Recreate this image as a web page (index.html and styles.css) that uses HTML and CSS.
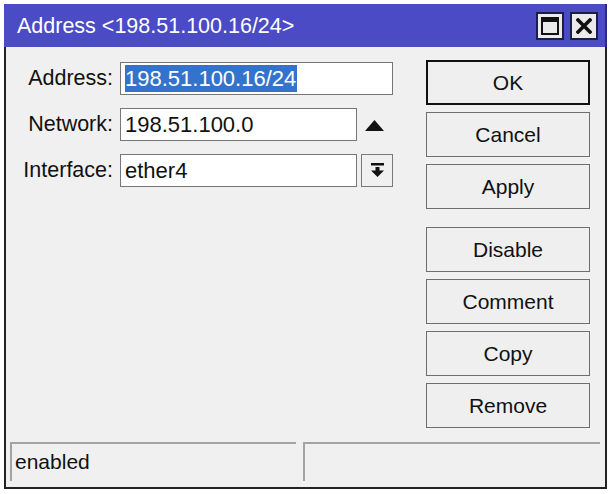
FILE: index.html
```html
<!DOCTYPE html>
<html>
<head>
<meta charset="utf-8">
<link rel="stylesheet" href="styles.css">
</head>
<body>
<div class="window">
  <div class="titlebar">
    <span class="title">Address &lt;198.51.100.16/24&gt;</span>
    <div class="tbtns">
      <div class="tbtn">
        <svg width="18" height="18" viewBox="0 0 18 18"><rect x="1" y="1" width="16" height="16" fill="none" stroke="#111" stroke-width="2"/><rect x="1" y="1" width="16" height="4" fill="#111"/></svg>
      </div>
      <div class="tbtn">
        <svg width="16" height="16" viewBox="0 0 16 16"><path d="M2 2 L14 14 M14 2 L2 14" stroke="#111" stroke-width="3.6" stroke-linecap="square"/></svg>
      </div>
    </div>
  </div>
  <div class="main">
    <div class="form">
      <label class="lbl">Address:</label>
      <div class="field wide"><span class="sel">198.51.100.16/24</span></div>
      <label class="lbl">Network:</label>
      <div class="field">198.51.100.0</div>
      <div class="uparrow">
        <svg width="19" height="11" viewBox="0 0 19 11"><polygon points="9.5,0 19,11 0,11" fill="#111"/></svg>
      </div>
      <label class="lbl">Interface:</label>
      <div class="field">ether4</div>
      <div class="ddbtn">
        <svg width="13" height="15" viewBox="0 0 13 15"><rect x="0" y="0" width="13" height="2.5" fill="#111"/><rect x="4.5" y="4" width="4" height="4" fill="#111"/><polygon points="0,7.5 13,7.5 6.5,14" fill="#111"/></svg>
      </div>
    </div>
    <div class="buttons">
      <div class="btn default">OK</div>
      <div class="btn">Cancel</div>
      <div class="btn">Apply</div>
      <div class="btn sep">Disable</div>
      <div class="btn">Comment</div>
      <div class="btn">Copy</div>
      <div class="btn">Remove</div>
    </div>
  </div>
  <div class="statusbar">
    <div class="panel left">enabled</div>
    <div class="panel right"></div>
  </div>
</div>
</body>
</html>
```
FILE: styles.css
```css
html, body {
  margin: 0;
  padding: 0;
  background: #ffffff;
}
body {
  padding: 4px 0 0 4px;
  font-family: "Liberation Sans", Arial, sans-serif;
  font-size: 21px;
  color: #111;
}
.window {
  width: 603px;
  box-sizing: border-box;
}
.titlebar {
  height: 43px;
  background: #4b4bc6;
  color: #fff;
  display: flex;
  align-items: center;
  padding-left: 13px;
  box-sizing: border-box;
  border-right: 2px solid #2c2c7a;
  font-size: 21.5px;
}
.title {
  padding-top: 1px;
}
.tbtns {
  margin-left: auto;
  display: flex;
  gap: 6px;
  padding-right: 7px;
  padding-top: 1px;
}
.tbtn {
  width: 28px;
  height: 28px;
  box-sizing: border-box;
  border: 2px solid #1d1d4a;
  background: #ebebeb;
  display: flex;
  align-items: center;
  justify-content: center;
}
.main {
  height: 395px;
  background: #f0f0f0;
  border-left: 2px solid #222;
  border-right: 2px solid #222;
  display: flex;
  box-sizing: border-box;
}
.form {
  display: grid;
  grid-template-columns: 114px 237px 4px 32px;
  grid-auto-rows: 33px;
  row-gap: 13px;
  padding-top: 15px;
  align-content: start;
  width: 387px;
}
.lbl {
  text-align: right;
  padding-right: 7px;
  line-height: 33px;
  grid-column: 1;
  font-size: 21.5px;
  white-space: nowrap;
}
.field {
  grid-column: 2;
  background: #fff;
  border: 1px solid #767676;
  box-sizing: border-box;
  line-height: 31px;
  padding-left: 4px;
  white-space: nowrap;
  font-size: 22px;
}
.field.wide {
  grid-column: 2 / 5;
  display: flex;
  align-items: center;
}
.sel {
  background: #3473cc;
  color: #fff;
  line-height: 27px;
  display: inline-block;
  padding-right: 1px;
}
.uparrow {
  grid-column: 4;
  display: flex;
  align-items: center;
  padding-left: 8px;
  padding-top: 1px;
  margin-left: -4px;
}
.ddbtn {
  grid-column: 4;
  border: 1px solid #7a7a7a;
  background: #f0f0f0;
  box-sizing: border-box;
  display: flex;
  align-items: center;
  justify-content: center;
}
.buttons {
  margin-left: 33px;
  padding-top: 13px;
  display: flex;
  flex-direction: column;
  gap: 7px;
  width: 164px;
}
.btn {
  height: 45px;
  box-sizing: border-box;
  border: 1px solid #6e6e6e;
  background: #efefef;
  display: flex;
  align-items: center;
  justify-content: center;
}
.btn.default {
  border: 2px solid #111;
}
.btn.sep {
  margin-top: 11px;
}
.statusbar {
  height: 47px;
  background: #f0f0f0;
  border-left: 2px solid #222;
  border-right: 2px solid #222;
  border-bottom: 2px solid #222;
  box-sizing: border-box;
  display: flex;
  gap: 7px;
  padding: 0 5px 6px 4px;
}
.panel {
  height: 39px;
  box-sizing: border-box;
  border-top: 2px solid #a3a3a3;
  border-left: 2px solid #a3a3a3;
  line-height: 36px;
  padding-left: 3px;
}
.panel.left {
  width: 286px;
}
.panel.right {
  flex: 1;
}
```
